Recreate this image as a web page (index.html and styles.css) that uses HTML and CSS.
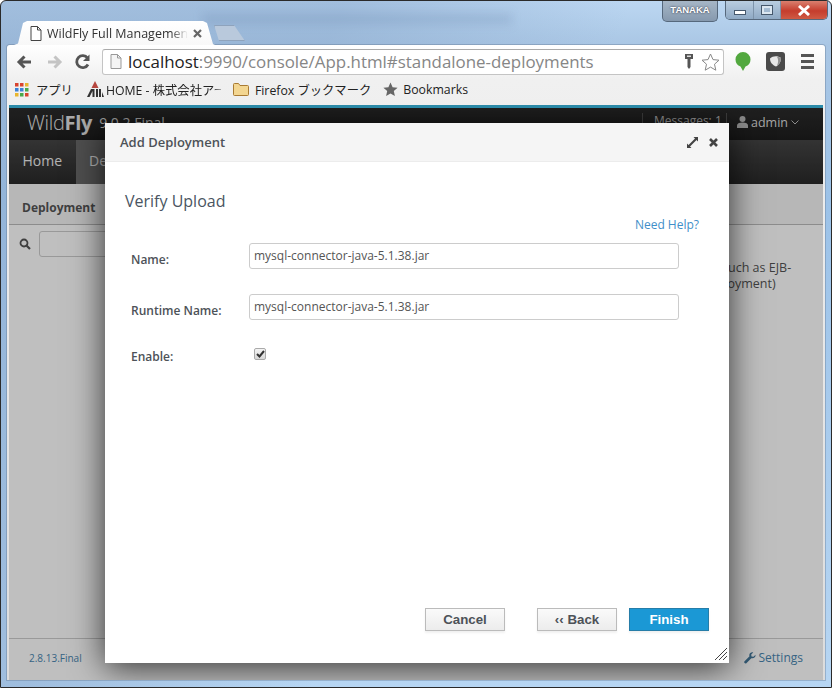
FILE: index.html
```html
<!DOCTYPE html>
<html lang="ja">
<head>
<meta charset="utf-8">
<title>WildFly Full Management</title>
<link rel="stylesheet" href="styles.css">
</head>
<body>
<div class="window">
  <div class="caption">
    <div class="tab">
      <svg class="tab-icon" width="12" height="15" viewBox="0 0 12 15"><path d="M1 .5h6.5L11 4v10.500H1z" fill="#fff" stroke="#444"/><path d="M7.500 .5V4H11" fill="none" stroke="#444"/></svg>
      <span class="tab-title">WildFly Full Management</span>
      <svg class="tab-close" width="9" height="9" viewBox="0 0 9 9"><path d="M1 1l7 7M8 1L1 8" stroke="#666" stroke-width="2.200"/></svg>
    </div>
    <div class="new-tab"></div>
    <div class="user-badge">TANAKA</div>
    <div class="win-buttons">
      <div class="win-btn"><span class="glyph-min"></span></div>
      <div class="win-btn narrow"><span class="glyph-max"></span></div>
      <div class="win-btn close"><svg width="14" height="11" viewBox="0 0 14 11"><path d="M2 1l10 9M12 1L2 10" stroke="#fff" stroke-width="3"/></svg></div>
    </div>
  </div>
  <div class="chrome">
    <div class="toolbar">
      <svg width="22" height="18" viewBox="0 0 22 18"><path d="M17 9H6M10.500 3.500L5 9l5.500 5.500" fill="none" stroke="#555" stroke-width="3"/></svg>
      <svg class="fwd" width="22" height="18" viewBox="0 0 22 18"><path d="M4 9h11M10.500 3.500L16 9l-5.500 5.500" fill="none" stroke="#c4c4c4" stroke-width="3"/></svg>
      <svg width="20" height="18" viewBox="0 0 20 18"><path d="M15 11.500A6 6 0 1 1 14.500 5" fill="none" stroke="#555" stroke-width="2.800"/><path d="M16.500 1.500V8H10z" fill="#555"/></svg>
      <div class="omnibox">
        <svg width="12" height="15" viewBox="0 0 12 15"><path d="M1 .5h6.500L11 4v10.500H1z" fill="#f4f4f4" stroke="#999"/><path d="M7.500 .5V4H11" fill="none" stroke="#999"/></svg>
        <div class="url"><span class="host">localhost</span>:9990/console/App.html#standalone-deployments</div>
        <svg width="10" height="16" viewBox="0 0 10 16"><path d="M1 0h8v5H6.500v8L5 15l-1.500-2V5H1z" fill="#555"/><rect x="3" y="1.500" width="4" height="1.500" fill="#ddd"/></svg>
        <svg class="star" width="19" height="18" viewBox="0 0 19 18"><path d="M9.500 1l2.500 5.600 6 .6-4.500 4 1.300 6-5.300-3.100-5.300 3.100 1.300-6-4.500-4 6-.6z" fill="#fff" stroke="#888"/></svg>
      </div>
      <svg class="ext-leaf" width="16" height="20" viewBox="0 0 16 20"><path d="M8 0a7.500 7.500 0 0 1 7.500 7.500c0 3.500-2 6-5 7L8 19l-2.500-4.500c-3-1-5-3.500-5-7A7.500 7.500 0 0 1 8 0z" fill="#52a83f"/></svg>
      <svg class="ext-box" width="19" height="19" viewBox="0 0 19 19"><rect width="19" height="19" rx="3" fill="#4a4a4a"/><path d="M4 6.500C7 3.500 12 3.500 15 6c0 4.500-2.500 7-5 8.500-3.500-1.500-6-4-6-8z" fill="#e6e6e6"/><path d="M11 4.800c2 .2 3 .6 4 1.200 0 3.500-1.500 6-4 7.500 1.500-3 1.500-6 0-8.700z" fill="#8f8f8f"/></svg>
      <div class="menu-icon"><i></i><i></i><i></i></div>
    </div>
    <div class="bookmarks">
      <div class="bm">
        <svg width="14" height="14" viewBox="0 0 14 14"><g fill="#d8442f"><rect width="3.500" height="3.500"/><rect x="5" width="3.500" height="3.500"/></g><rect x="10" width="3.500" height="3.500" fill="#e8b52e"/><g fill="#3b82d8"><rect y="5" width="3.500" height="3.500"/><rect x="5" y="5" width="3.500" height="3.500"/></g><rect x="10" y="5" width="3.500" height="3.500" fill="#4aa84a"/><rect y="10" width="3.500" height="3.500" fill="#e8b52e"/><rect x="5" y="10" width="3.500" height="3.500" fill="#4aa84a"/><rect x="10" y="10" width="3.500" height="3.500" fill="#d8442f"/></svg>
        <span>アプリ</span>
      </div>
      <div class="bm home">
        <svg width="18" height="17" viewBox="0 0 18 17"><path d="M9 0l3.500 7h-7z" fill="#b5473f"/><path d="M5 8L1 16h2.500L6.500 10V16h2V8zM10 8h2v8h-2zM13 8h2v8h-2zM16 11l2 5h-2z" fill="#333"/></svg>
        <span class="fade">HOME - 株式会社アー</span>
      </div>
      <div class="bm folder">
        <svg width="16" height="13" viewBox="0 0 16 13"><path d="M.5 2V11.500a1 1 0 0 0 1 1h13a1 1 0 0 0 1-1V3.500a1 1 0 0 0-1-1H7L5.500 .5h-4a1 1 0 0 0-1 1.500z" fill="#f3d691" stroke="#a97b33"/></svg>
        <span>Firefox ブックマーク</span>
      </div>
      <div class="bm mark">
        <svg width="15" height="15" viewBox="0 0 15 15"><path d="M7.500 .5l2.100 4.700 5 .5-3.800 3.300 1.100 5-4.400-2.600L3.100 14l1.100-5L.4 5.700l5-.5z" fill="#666"/></svg>
        <span>Bookmarks</span>
      </div>
    </div>
    <div class="console">
      <header class="top-bar">
        <div class="brand"><span class="brand-light">Wild</span><b>Fly</b></div>
        <div class="version">9.0.2.Final</div>
        <div class="messages">Messages: 1</div>
        <div class="admin">
          <svg width="11" height="12" viewBox="0 0 11 12"><circle cx="5.500" cy="3" r="3" fill="#bbb"/><path d="M0 12V9.500C0 7.500 2 6.500 5.500 6.500S11 7.500 11 9.500V12z" fill="#bbb"/></svg>
          admin
          <svg width="8" height="5" viewBox="0 0 8 5"><path d="M.5 .5L4 4 7.500 .5" fill="none" stroke="#bbb"/></svg>
        </div>
      </header>
      <nav class="nav">
        <div class="nav-item">Home</div>
        <div class="nav-item active">Deployments</div>
      </nav>
      <div class="sub-bar">Deployment</div>
      <main class="main">
        <div class="search">
          <svg width="12" height="12" viewBox="0 0 12 12"><circle cx="5" cy="5" r="3.500" fill="none" stroke="#555" stroke-width="1.800"/><path d="M7.500 7.500L11 11" stroke="#555" stroke-width="2.200"/></svg>
          <div class="search-box"></div>
        </div>
        <p class="note">for such as EJB-<br>deployment)</p>
      </main>
      <footer class="foot">
        <span class="build">2.8.13.Final</span>
        <span class="settings">
          <svg width="12" height="12" viewBox="0 0 12 12"><path d="M11.500 2.800L9.500 4.800 7.500 4.500 7.200 2.500 9.200 .5C7.500 0 5.500 1 5.300 3c0 .5 0 1 .2 1.300L.8 9c-.8.8-.8 1.400-.2 2s1.300.6 2-.1l4.700-4.700c2.300.7 4.600-1 4.200-3.400z" fill="#44789c"/></svg>
          Settings
        </span>
      </footer>
      <div class="backdrop"></div>
      <section class="modal">
        <div class="modal-head">
          <span class="modal-title">Add Deployment</span>
          <svg class="expand" width="11" height="11" viewBox="0 0 11 11"><path d="M0 11V6.500L1.500 8 8 1.500 6.500 0H11v4.500L9.500 3 3 9.500 4.500 11z" fill="#444"/></svg>
          <svg class="dismiss" width="9" height="9" viewBox="0 0 9 9"><path d="M1 1l7 7M8 1L1 8" stroke="#444" stroke-width="2.600"/></svg>
        </div>
        <div class="modal-body">
          <h2>Verify Upload</h2>
          <a class="help">Need Help?</a>
          <div class="form">
            <label class="l-name">Name:</label>
            <div class="field">mysql-connector-java-5.1.38.jar</div>
            <label class="l-runtime">Runtime Name:</label>
            <div class="field">mysql-connector-java-5.1.38.jar</div>
            <label class="l-enable">Enable:</label>
            <div class="check"><svg width="9" height="8" viewBox="0 0 9 8"><path d="M1 4l2.500 2.500L8 1" fill="none" stroke="#333" stroke-width="2"/></svg></div>
          </div>
        </div>
        <div class="modal-foot">
          <button class="btn cancel">Cancel</button>
          <button class="btn">‹‹ Back</button>
          <button class="btn primary">Finish</button>
        </div>
        <svg class="grip" width="12" height="12" viewBox="0 0 12 12"><path d="M0 12L12 0M4 12l8-8M8 12l4-4" stroke="#444" stroke-width="1"/></svg>
      </section>
    </div>
  </div>
</div>
</body>
</html>
```

FILE: styles.css
```css
* { box-sizing: border-box; }
html, body { margin: 0; height: 100%; overflow: hidden; }
body { font-family: "Open Sans", "Noto Sans CJK JP", sans-serif; }

.window {
  width: 832px;
  height: 688px;
  padding: 0 6px 7px;
  display: flex;
  flex-direction: column;
  border: 1px solid #2a2a2a;
  border-radius: 6px 6px 0 0;
  background:
    linear-gradient(115deg, rgba(140,170,205,.55) 0 30%, rgba(255,255,255,0) 55%),
    linear-gradient(180deg, #bcd7f2 0, #a9c6e4 45px, #9cc2e8 200px, #b7d6f3 100%);
}

.caption { height: 44px; flex: none; display: flex; align-items: flex-start; position: relative; }
.caption::before {
  content: "";
  position: absolute;
  left: 195px;
  top: 12px;
  width: 310px;
  height: 12px;
  background: rgba(90,120,160,.16);
  filter: blur(4px);
}
.tab {
  position: relative;
  width: 201px;
  height: 24px;
  margin: 20px 0 0 7px;
  padding: 0 13px 0 16px;
  display: flex;
  align-items: center;
  gap: 5px;
  background: linear-gradient(#fff, #f8f8f8);
  clip-path: polygon(0 100%, 4px 94%, 9px 8%, 13px 0, 189px 0, 193px 8%, 199px 96%, 201px 100%);
}
.tab-icon { flex: none; }
.tab-title {
  flex: 1;
  overflow: hidden;
  white-space: nowrap;
  font-size: 12.500px;
  color: #333;
  -webkit-mask-image: linear-gradient(90deg, #000 88%, transparent);
  mask-image: linear-gradient(90deg, #000 88%, transparent);
}
.tab-close { flex: none; }
.new-tab {
  position: relative;
  width: 31px;
  height: 16px;
  margin: 24px 0 0 -1px;
  background: #b9c9dc;
  border: 1px solid #8ea3bc;
  clip-path: polygon(0 0, 20px 0, 31px 100%, 5px 100%);
}
.user-badge {
  width: 56px;
  height: 21px;
  margin-left: auto;
  border: 1px solid #56687c;
  border-top: 0;
  border-radius: 0 0 5px 5px;
  background: linear-gradient(#a6b6c6, #8699ae);
  color: #fff;
  font: 700 9.500px/17px "Liberation Sans", sans-serif;
  text-align: center;
  text-shadow: 0 0 2px #223;
}
.win-buttons {
  display: flex;
  height: 19px;
  margin: 0 -3px 0 7px;
  border: 1px solid #56687c;
  border-top: 0;
  border-radius: 0 0 5px 5px;
  overflow: hidden;
}
.win-btn {
  width: 28px;
  display: flex;
  align-items: center;
  justify-content: center;
  background: linear-gradient(#b9cde0, #8fa9c4);
  border-right: 1px solid #7d93aa;
}
.win-btn.narrow { width: 27px; }
.win-btn.close {
  width: 46px;
  border-right: 0;
  background: linear-gradient(#d9806f, #c53d2d 55%, #cf5a44);
}
.glyph-min { width: 12px; height: 5px; margin-top: 5px; background: #fff; border: 1px solid #46586c; }
.glyph-max { width: 12px; height: 10px; border: 1px solid #46586c; box-shadow: inset 0 0 0 2px #dbe6f0; }

.chrome {
  flex: 1;
  min-height: 0;
  min-width: 0;
  display: flex;
  flex-direction: column;
  background: linear-gradient(#fff, #f0f0f0 34px, #dcdcdc);
  border-radius: 3px 3px 0 0;
  box-shadow: 0 0 0 1px rgba(90,110,135,.35);
}
.toolbar {
  height: 33px;
  flex: none;
  display: flex;
  align-items: center;
  padding: 0 0 0 7px;
}
.toolbar > svg:nth-child(2) { margin-left: 8px; }
.toolbar > svg:nth-child(3) { margin-left: 7px; }
.omnibox {
  width: 622px;
  height: 26px;
  margin-left: 9px;
  padding: 0 3px 0 7px;
  display: flex;
  align-items: center;
  background: #fff;
  border: 1px solid #c4c4c4;
  border-top-color: #aaa;
  border-radius: 3px;
}
.url {
  flex: 1;
  margin-left: 6px;
  font-size: 16.900px;
  line-height: 24px;
  white-space: nowrap;
  color: #868686;
}
.host { color: #222; }
.star { margin-left: 7px; }
.ext-leaf { margin-left: 11px; }
.ext-box { margin-left: 15px; }
.menu-icon { width: 13px; margin-left: 16px; display: flex; flex-direction: column; gap: 3px; }
.menu-icon i { display: block; height: 3px; background: #555; }

.bookmarks {
  height: 27px;
  flex: none;
  display: flex;
  align-items: center;
  padding: 0 0 4px 8px;
  font-size: 12.300px;
  color: #222;
}
.bm { display: flex; align-items: center; gap: 7px; margin-right: 13px; white-space: nowrap; }
.bm svg { flex: none; }
.home { width: 135px; gap: 2px; margin-right: 12px; overflow: hidden; }
.home .fade {
  -webkit-mask-image: linear-gradient(90deg, #000 88%, transparent);
  mask-image: linear-gradient(90deg, #000 88%, transparent);
}
.folder { gap: 6px; margin-right: 12px; }
.mark { gap: 5px; }

.console {
  flex: 1;
  min-height: 0;
  margin: 0 2px;
  position: relative;
  display: flex;
  flex-direction: column;
  background: #fff;
  border-top: 3px solid #2b8aa8;
  overflow: hidden;
}
.top-bar {
  height: 32px;
  flex: none;
  display: flex;
  align-items: center;
  padding: 0 0 4px 18px;
  background: linear-gradient(#2b2b2b, #1d1d1d);
  color: #ddd;
}
.brand { font-size: 20px; letter-spacing: -.3px; color: #e4e4e4; }
.brand-light { font-weight: 300; }
.version { margin-left: 7px; font-size: 14px; color: #ddd; }
.messages {
  margin-left: auto;
  width: 85px;
  height: 22px;
  margin-top: 4px;
  padding-left: 11px;
  border-left: 1px solid #555;
  border-right: 1px solid #555;
  font-size: 12px;
  line-height: 16px;
  white-space: nowrap;
  color: #ccc;
}
.admin {
  width: 96px;
  padding-left: 10px;
  display: flex;
  align-items: center;
  gap: 3px;
  font-size: 12.500px;
  color: #ddd;
}
.nav {
  height: 44px;
  flex: none;
  display: flex;
  background: linear-gradient(#454545, #2a2a2a);
  color: #eee;
  font-size: 14px;
}
.nav-item { padding: 0 13.500px; line-height: 41px; }
.nav-item.active { background: #6a6a6a; }
.sub-bar {
  height: 41px;
  flex: none;
  padding: 15px 13px 0;
  border-bottom: 1px solid #bbb;
  background: #f5f5f5;
  font-size: 12px;
  font-weight: 700;
  color: #555;
}
.main { flex: 1; min-height: 0; display: flex; justify-content: space-between; padding: 6px 0 0 10px; background: #fff; }
.search { display: flex; align-items: flex-start; gap: 8px; }
.search svg { margin-top: 7px; }
.search-box { width: 200px; height: 26px; border: 1px solid #ccc; border-radius: 3px; background: #fff; }
.note { margin: 29px 0 0 0; width: 121px; font-size: 12.500px; line-height: 16px; color: #555; white-space: nowrap; }
.foot {
  height: 42px;
  flex: none;
  display: flex;
  align-items: center;
  justify-content: space-between;
  padding: 0 20px 4px 20px;
  border-top: 1px solid #ccc;
  background: #fff;
}
.build { font-size: 10px; color: #4a86b0; }
.settings { display: flex; align-items: center; gap: 3px; font-size: 12px; color: #4a86b0; }

.backdrop { position: absolute; inset: 0; background: rgba(0,0,0,.25); }
.modal {
  position: absolute;
  left: 96px;
  top: 15px;
  width: 624px;
  height: 540px;
  display: flex;
  flex-direction: column;
  background: #fff;
  box-shadow: 0 4px 32px rgba(0,0,0,.75);
}
.modal-head {
  height: 39px;
  flex: none;
  display: flex;
  align-items: center;
  padding: 0 11px 0 15px;
  background: #f5f5f5;
  border-bottom: 1px solid #ececec;
}
.modal-title { flex: 1; font-size: 13px; font-weight: 600; color: #4d5258; }
.dismiss { margin-left: 11px; }
.modal-body { flex: 1; min-height: 0; padding: 29px 30px 0 20px; position: relative; }
h2 { margin: 0; font-size: 16px; line-height: 20px; font-weight: 400; color: #4a5562; }
.help { display: block; margin-top: 5px; text-align: right; font-size: 12px; line-height: 18px; color: #3f8fc9; }
.form {
  margin-top: 9px;
  display: grid;
  grid-template-columns: 124px 430px;
  grid-auto-rows: auto;
  row-gap: 25px;
  align-items: start;
}
.form label { padding-left: 6px; font-size: 12px; font-weight: 600; color: #4d5258; }
.l-name { margin-top: 8px; }
.l-runtime { margin-top: 8px; }
.l-enable { margin-top: 3px; }
.field {
  height: 26px;
  padding-left: 4px;
  border: 1px solid #ccc;
  border-radius: 3px;
  font-size: 12px;
  line-height: 23px;
  color: #555;
}
.check {
  width: 12px;
  height: 12px;
  margin: 3px 0 0 5px;
  display: flex;
  align-items: center;
  justify-content: center;
  border: 1px solid #aaa;
  border-radius: 2px;
  background: linear-gradient(#f4f4f4, #d8d8d8);
}
.modal-foot { flex: none; height: 55px; display: flex; align-items: flex-start; padding-right: 20px; justify-content: flex-end; gap: 12px; }
.btn {
  width: 80px;
  height: 23px;
  padding: 0;
  font: 700 13.300px/1 "Liberation Sans", sans-serif;
  color: #4d5258;
  background: linear-gradient(#fafafa, #ececec);
  border: 1px solid #bbb;
  box-shadow: 0 2px 2px rgba(0,0,0,.06);
}
.btn.cancel { margin-right: 20px; }
.btn.primary { color: #fff; background: #1b98d5; border-color: #267da8; }
.grip { position: absolute; right: 2px; bottom: 3px; }
```
